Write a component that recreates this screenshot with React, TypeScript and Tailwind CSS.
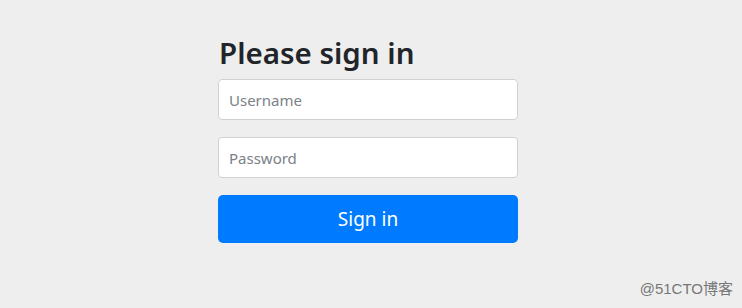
import React from 'react';

const App: React.FC = () => {
  return (
    <div
      className="w-[742px] h-[308px] bg-[#eeeeee] flex flex-col"
      style={{ fontFamily: '"Noto Sans", "Open Sans", sans-serif' }}
    >
      <main className="flex-1 pl-[218px] pt-[34px]">
        <form className="w-[300px] flex flex-col" onSubmit={(e) => e.preventDefault()}>
          <h2 className="text-[29.5px] leading-[38px] font-semibold text-[#212529] mb-[7px] pl-px">
            Please sign in
          </h2>
          <input
            type="text"
            placeholder="Username"
            className="h-[41px] w-full rounded-[4px] border border-[#cfd2d5] bg-white px-[10px] text-[15px] text-[#495057] placeholder:text-[#7b8188] outline-none"
          />
          <input
            type="password"
            placeholder="Password"
            className="mt-[17px] h-[41px] w-full rounded-[4px] border border-[#cfd2d5] bg-white px-[10px] text-[15px] text-[#495057] placeholder:text-[#7b8188] outline-none"
          />
          <button
            type="submit"
            className="mt-[17px] h-[48px] w-full rounded-[5px] bg-[#007bff] text-[19px] text-white"
          >
            Sign in
          </button>
        </form>
      </main>
      <div
        className="flex justify-end pr-[9px] pb-[8px] text-[15px] text-[#777777]"
        style={{ fontFamily: '"Liberation Sans", "Noto Sans CJK SC", sans-serif' }}
      >
        @51CTO博客
      </div>
    </div>
  );
};

export default App;
